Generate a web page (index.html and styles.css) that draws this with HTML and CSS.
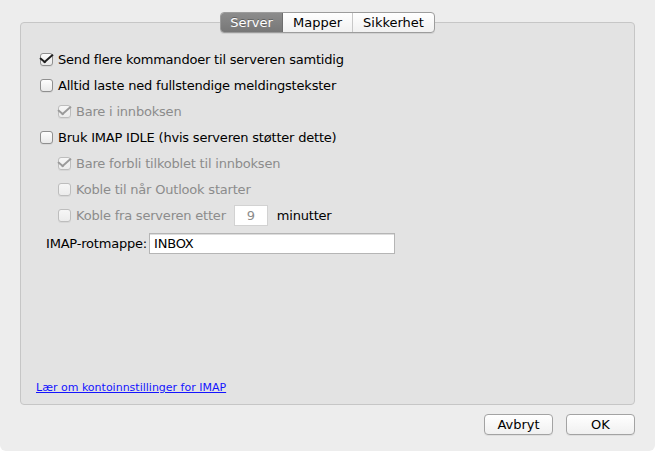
FILE: index.html
```html
<!DOCTYPE html>
<html>
<head>
<meta charset="utf-8">
<link rel="stylesheet" href="styles.css">
</head>
<body>
<div class="window">
  <div class="tabs">
    <div class="seg">
      <span class="tab active">Server</span><span class="tab">Mapper</span><span class="tab">Sikkerhet</span>
    </div>
  </div>
  <div class="panel">
    <div class="options">
      <label class="row"><span class="cb checked"></span><span>Send flere kommandoer til serveren samtidig</span></label>
      <label class="row"><span class="cb"></span><span>Alltid laste ned fullstendige meldingstekster</span></label>
      <label class="row sub dis"><span class="cb checked"></span><span>Bare i innboksen</span></label>
      <label class="row"><span class="cb"></span><span>Bruk IMAP IDLE (hvis serveren støtter dette)</span></label>
      <label class="row sub dis"><span class="cb checked"></span><span>Bare forbli tilkoblet til innboksen</span></label>
      <label class="row sub dis"><span class="cb"></span><span>Koble til når Outlook starter</span></label>
      <div class="row sub"><span class="cb dcb"></span><span class="dtext">Koble fra serveren etter</span><span class="num">9</span><span class="unit">minutter</span></div>
      <div class="field"><span class="flabel">IMAP-rotmappe:</span><span class="finput">INBOX</span></div>
    </div>
    <a class="link" href="#">Lær om kontoinnstillinger for IMAP</a>
  </div>
  <div class="buttons">
    <button class="btn">Avbryt</button>
    <button class="btn">OK</button>
  </div>
</div>
</body>
</html>
```
FILE: styles.css
```css
html, body { margin: 0; padding: 0; background: #fff; }
body { font-family: "DejaVu Sans", "Liberation Sans", sans-serif; font-size: 13px; color: #000; letter-spacing: -0.2px; }
.window {
  width: 655px; height: 451px; background: #ededed;
  border-radius: 0 0 6px 6px; box-sizing: border-box;
  padding: 12px 20px 0 20px; position: relative;
}
.tabs { height: 21px; display: flex; justify-content: center; position: relative; z-index: 2; }
.seg {
  display: flex; height: 19px; border: 1px solid #9c9c9c; border-radius: 4px;
  background: linear-gradient(#ffffff, #f1f1f1); overflow: hidden; margin-left: 0;
  box-shadow: 0 1px 0 rgba(0,0,0,0.08);
}
.tab { display: flex; align-items: center; justify-content: center; font-size: 13px; padding: 0; line-height: 19px; letter-spacing: 0; }
.tab:nth-child(1) { width: 61px; }
.tab:nth-child(2) { width: 69px; border-right: 1px solid #c8c8c8; }
.tab:nth-child(3) { width: 81px; }
.tab.active { background: linear-gradient(#8c8c8c, #777); color: #fff; border-right: 1px solid #6e6e6e; text-shadow: 0 -1px 0 rgba(0,0,0,0.3); }
.panel {
  margin-top: -11px; height: 383px; box-sizing: border-box;
  background: #e3e3e3; border: 1px solid #c6c6c6; border-radius: 4px;
  padding: 23px 0 0 20px; display: flex; flex-direction: column;
}
.options { display: flex; flex-direction: column; }
.row { display: flex; align-items: center; height: 26px; gap: 5px; white-space: nowrap; }
.row.sub { padding-left: 18px; }
.dis, .dtext { color: #8c8c8c; }
.cb {
  width: 11px; height: 11px; border: 1px solid #8f8f8f; border-radius: 3px;
  background: linear-gradient(#fdfdfd, #e9e9e9); position: relative; flex: none;
  box-shadow: 0 1px 0 rgba(0,0,0,0.05); margin-left: -1px;
}
.dis .cb, .dcb { border-color: #bdbdbd; background: linear-gradient(#f6f6f6, #ececec); }
.cb.checked::after {
  content: ""; position: absolute; left: 2px; top: -3px; width: 5px; height: 10px;
  border-right: 2.5px solid #1e1e1e; border-bottom: 2.5px solid #1e1e1e;
  transform: rotate(40deg) skewX(-8deg);
}
.dis .cb.checked::after { border-color: #9a9a9a; }
.num {
  width: 34px; height: 21px; box-sizing: border-box; background: #fff; border: 1px solid #d2d2d2;
  display: flex; align-items: center; justify-content: center; color: #8c8c8c; margin-left: 3px;
}
.unit { margin-left: 4px; }
.field { display: flex; align-items: center; height: 30px; padding-left: 5px; white-space: nowrap; }
.flabel { width: 103px; flex: none; }
.finput {
  width: 246px; height: 21px; box-sizing: border-box; background: #fff; border: 1px solid #b5b5b5;
  display: flex; align-items: center; padding-left: 4px; box-shadow: inset 0 1px 0 #ddd;
}
.link { margin-top: auto; margin-bottom: 10px; margin-left: -5px; font-size: 11px; color: #1414ff; text-decoration: underline; letter-spacing: 0; }
.buttons { display: flex; justify-content: flex-end; gap: 13px; padding-top: 9px; }
.btn {
  width: 69px; height: 21px; font-family: inherit; font-size: 13px; color: #000; letter-spacing: 0;
  border: 1px solid #a3a3a3; border-radius: 4px; background: linear-gradient(#ffffff, #f0f0f0);
  padding: 0; box-shadow: 0 1px 0 rgba(0,0,0,0.06);
}
```
